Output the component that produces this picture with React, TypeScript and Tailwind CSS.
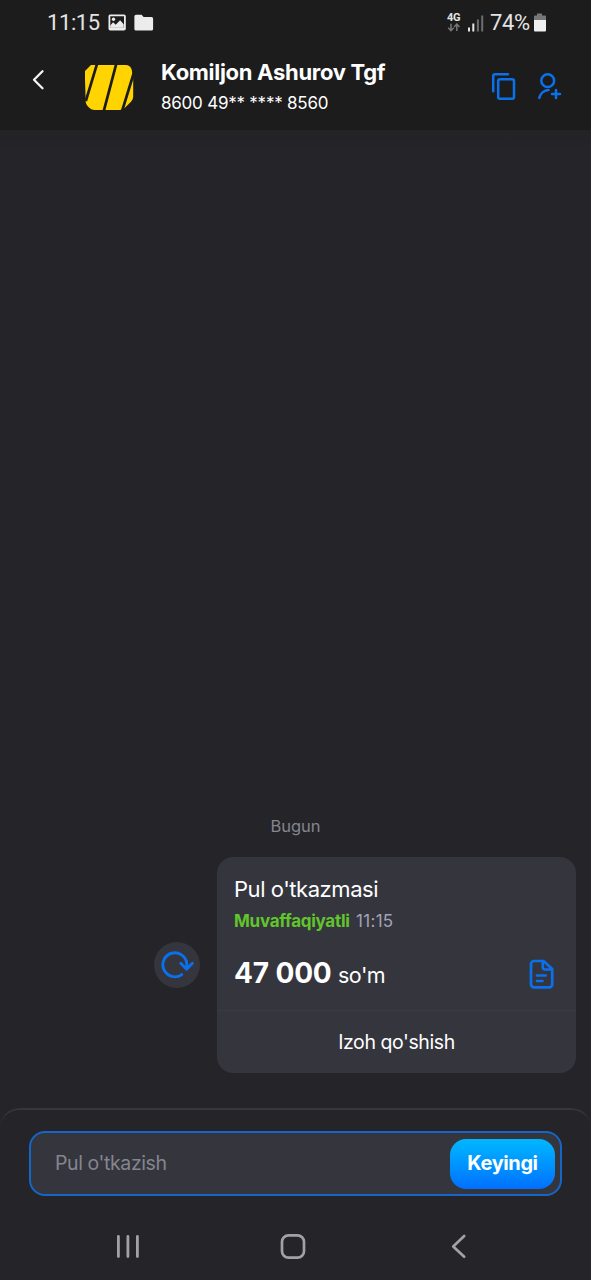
const BLUE = "#0b70ec";

function StatusBar() {
  return (
    <div className="flex h-[45px] items-center pl-[47px] pr-[44px] font-['Roboto',sans-serif] text-[#e4e4e4]">
      <span className="w-[60px] text-[22px] leading-[22px] tracking-[-0.4px]">11:15</span>
      <svg className="shrink-0" width="48" height="20" viewBox="0 0 48 20">
        <path fillRule="evenodd" fill="#ececec" d="M2.800 1.500h14.200a1.800 1.800 0 0 1 1.800 1.800v12.400a1.800 1.800 0 0 1-1.800 1.800H3.300A1.800 1.800 0 0 1 1.500 15.700V3.300A1.800 1.800 0 0 1 2.800 1.500ZM3.300 3.300v11.200h13.700V3.300Z" />
        <path fill="#ececec" d="M3.300 14.700v-2.200l2.800-3.300 2.600 2.600 4.400-4.600 3.600 4V14.700Z" />
        <circle cx="6.500" cy="6.200" r="1.700" fill="#ececec" />
        <path fill="#ececec" d="M29 1.700h5.600l2 2.300h7.900a1.600 1.600 0 0 1 1.600 1.600v10.300a1.600 1.600 0 0 1-1.600 1.600H29a1.600 1.600 0 0 1-1.600-1.600V3.300A1.600 1.600 0 0 1 29 1.700Z" />
      </svg>
      <div className="ml-auto flex items-center">
        <div className="flex w-[21px] flex-col">
          <span className="text-[11px] font-bold leading-[10px] tracking-[-0.4px]">4G</span>
          <svg width="14" height="9" viewBox="0 0 14 9" fill="none" stroke="#777" strokeWidth="1.500">
            <path d="M4 .8v6.800M1.200 4.800L4 7.700l2.700-2.900M9.800 8V1.200M7.100 4l2.700-2.900L12.500 4" />
          </svg>
        </div>
        <svg width="22" height="20" viewBox="0 0 22 20">
          <path fill="#e6e6e6" d="M0 14.500h2v4H0zM4.300 10.500h2v8h-2z" />
          <path fill="#6d6d6d" d="M8.900 6.500h2v12h-2zM13.200 2.500h2v16h-2z" />
        </svg>
        <span className="w-[43px] text-[22px] leading-[22px] tracking-[-0.4px]">74%</span>
        <svg width="14" height="20" viewBox="0 0 14 20">
          <path fill="#777" d="M4 .5h5v2h3a1 1 0 0 1 1 1v4H1v-4a1 1 0 0 1 1-1h2Z" />
          <path fill="#f0f0f0" d="M1 7h12v10.500a1 1 0 0 1-1 1H2a1 1 0 0 1-1-1Z" />
        </svg>
      </div>
    </div>
  );
}

function BankLogo() {
  return (
    <svg className="ml-[39px] mt-[20px] shrink-0" width="49" height="46" viewBox="0 0 49 46">
      <path fill="#ffd400" d="M6 0h34.500q5 0 6.300 5l1.400 9v17.500q0 3-2 5l-6 6q-2.500 2.500-5.500 2.500H9.500q-3 0-5-2l-2-2q-1.500-1.500-1.800-4L0 14V6Z" />
      <path stroke="#1c1c1c" strokeWidth="2.700" fill="none" d="M12.300-2L.8 36M31.500-2L18.500 47M48.800 8L36.800 47" />
    </svg>
  );
}

function Header() {
  return (
    <header className="h-[130px] bg-[#1c1c1c]">
      <StatusBar />
      <div className="flex h-[85px]">
        <svg className="ml-[31px] mt-[24px] shrink-0" width="15" height="22" viewBox="0 0 15 22" fill="none" stroke="#f4f4f4" strokeWidth="2.300" strokeLinecap="round" strokeLinejoin="round">
          <path d="M11.500 2.300L3 10.800l8.500 8.500" />
        </svg>
        <BankLogo />
        <div className="ml-[27px] mt-[12px] flex flex-col whitespace-nowrap text-white">
          <span className="text-[22px] font-bold leading-[30px] tracking-[-0.3px]">Komiljon Ashurov Tgf</span>
          <span className="mt-[1px] text-[17px] leading-[30px] tracking-[-0.23px]">8600 49** **** 8560</span>
        </div>
        <svg className="ml-auto mt-[27px] shrink-0" width="28" height="30" viewBox="0 0 28 30" fill="none" stroke={BLUE} strokeWidth="2.500" strokeLinecap="round" strokeLinejoin="round">
          <path d="M19 2.300H6.200a2 2 0 0 0-2 2V19.300" />
          <rect x="9.200" y="7.300" width="15.800" height="19.400" rx="1.800" />
        </svg>
        <svg className="ml-[17px] mr-[29px] mt-[27px] shrink-0" width="28" height="30" viewBox="0 0 28 30" fill="none" stroke={BLUE} strokeWidth="2.500" strokeLinecap="round">
          <circle cx="13.700" cy="8.700" r="6.400" />
          <path d="M5.200 25.900a10.500 10.500 0 0 1 9.300-8M22 18v8M18 22h8" />
        </svg>
      </div>
    </header>
  );
}

function RepeatButton() {
  return (
    <button className="mr-[17px] flex size-[46px] items-center justify-center rounded-full bg-[#35353e]">
      <svg width="46" height="46" viewBox="0 0 46 46" fill="none" stroke={BLUE} strokeWidth="2.900" strokeLinecap="round" strokeLinejoin="round">
        <path d="M27.800 32.600A12 12 0 1 1 32.800 21.500v5M26.800 21.200l5.800 6 5.800-6" />
      </svg>
    </button>
  );
}

function TransferCard() {
  return (
    <section className="flex h-[216px] w-[359px] flex-col rounded-[16px] bg-[#35353e] text-white">
      <div className="flex h-[154px] flex-col border-b border-[#3b3b44] pl-[17px] pt-[17px]">
        <span className="text-[22px] leading-[30px] tracking-[-0.45px]">Pul o'tkazmasi</span>
        <div className="mt-[2px] flex text-[17px] leading-[30px]">
          <span className="w-[122px] font-bold tracking-[-0.27px] text-[#61c52b]">Muvaffaqiyatli</span>
          <span className="tracking-[0.3px] text-[#a3a3b8]">11:15</span>
        </div>
        <div className="mt-[17px] flex items-center">
          <div className="flex items-baseline leading-[40px]">
            <span className="w-[104px] text-[28px] font-bold tracking-[-0.15px]">47 000</span>
            <span className="text-[21.500px] tracking-[-0.5px]">so'm</span>
          </div>
          <svg className="ml-auto mr-[21px] mt-px" width="28" height="32" viewBox="0 0 28 32" fill="none" stroke={BLUE} strokeWidth="2.700" strokeLinecap="round" strokeLinejoin="round">
            <path d="M7 2h9.500L25.200 10v15.300a3 3 0 0 1-3 3H7a3 3 0 0 1-3-3V5a3 3 0 0 1 3-3Z" />
            <path d="M15.800 2.500v6a2 2 0 0 0 2 2h7M10 16.500h8.700M10 22h5.500" />
          </svg>
        </div>
      </div>
      <button className="flex flex-1 items-center justify-center text-[19.500px] leading-[30px] tracking-[-0.42px]">Izoh qo'shish</button>
    </section>
  );
}

function Composer() {
  return (
    <div className="h-[104px] rounded-t-[20px] border-t-2 border-[#36363b] bg-[#242429] px-[29px] pt-[21px]">
      <div className="flex h-[65px] items-center justify-between rounded-[16px] border-2 border-[#1467c8] bg-[#35353e] pl-[24px] pr-[5px]">
        <span className="pb-[2px] text-[19.500px] leading-[30px] tracking-[-0.4px] text-[#85858f]">Pul o'tkazish</span>
        <button className="h-[50px] w-[105px] rounded-[16px] bg-linear-to-b from-[#00b7ff] to-[#006fff] pb-[2px] text-[20px] font-bold tracking-[-0.4px] text-white">Keyingi</button>
      </div>
    </div>
  );
}

function NavBar() {
  return (
    <nav className="flex h-[68px] bg-[#242429]">
      <svg className="ml-[115px] mt-[22px]" width="26" height="26" viewBox="0 0 26 26" stroke="#a2a2a4" strokeWidth="2.800" strokeLinecap="round">
        <path d="M3.400 2.500v20M12.900 2.500v20M22.400 2.500v20" />
      </svg>
      <svg className="ml-[139px] mt-[21px]" width="26" height="28" viewBox="0 0 26 28" fill="none" stroke="#a2a2a4" strokeWidth="2.700">
        <rect x="2" y="2.300" width="22" height="22.400" rx="6.500" />
      </svg>
      <svg className="ml-[144px] mt-[22px]" width="18" height="26" viewBox="0 0 18 26" fill="none" stroke="#a2a2a4" strokeWidth="2.700" strokeLinecap="round" strokeLinejoin="round">
        <path d="M14.200 2L3.200 12.400l11 10.300" />
      </svg>
    </nav>
  );
}

export default function App() {
  return (
    <div className="flex h-[1280px] w-[591px] flex-col overflow-hidden bg-[#242429] font-['Inter',sans-serif]">
      <Header />
      <main className="flex flex-1 flex-col justify-end bg-linear-to-b from-[#232326] to-[#242429] to-2% pb-[35px]">
        <p className="mb-[16px] text-center text-[16.500px] leading-[30px] text-[#85858f]">Bugun</p>
        <div className="flex items-center justify-end pr-[15px]">
          <RepeatButton />
          <TransferCard />
        </div>
      </main>
      <Composer />
      <NavBar />
    </div>
  );
}
